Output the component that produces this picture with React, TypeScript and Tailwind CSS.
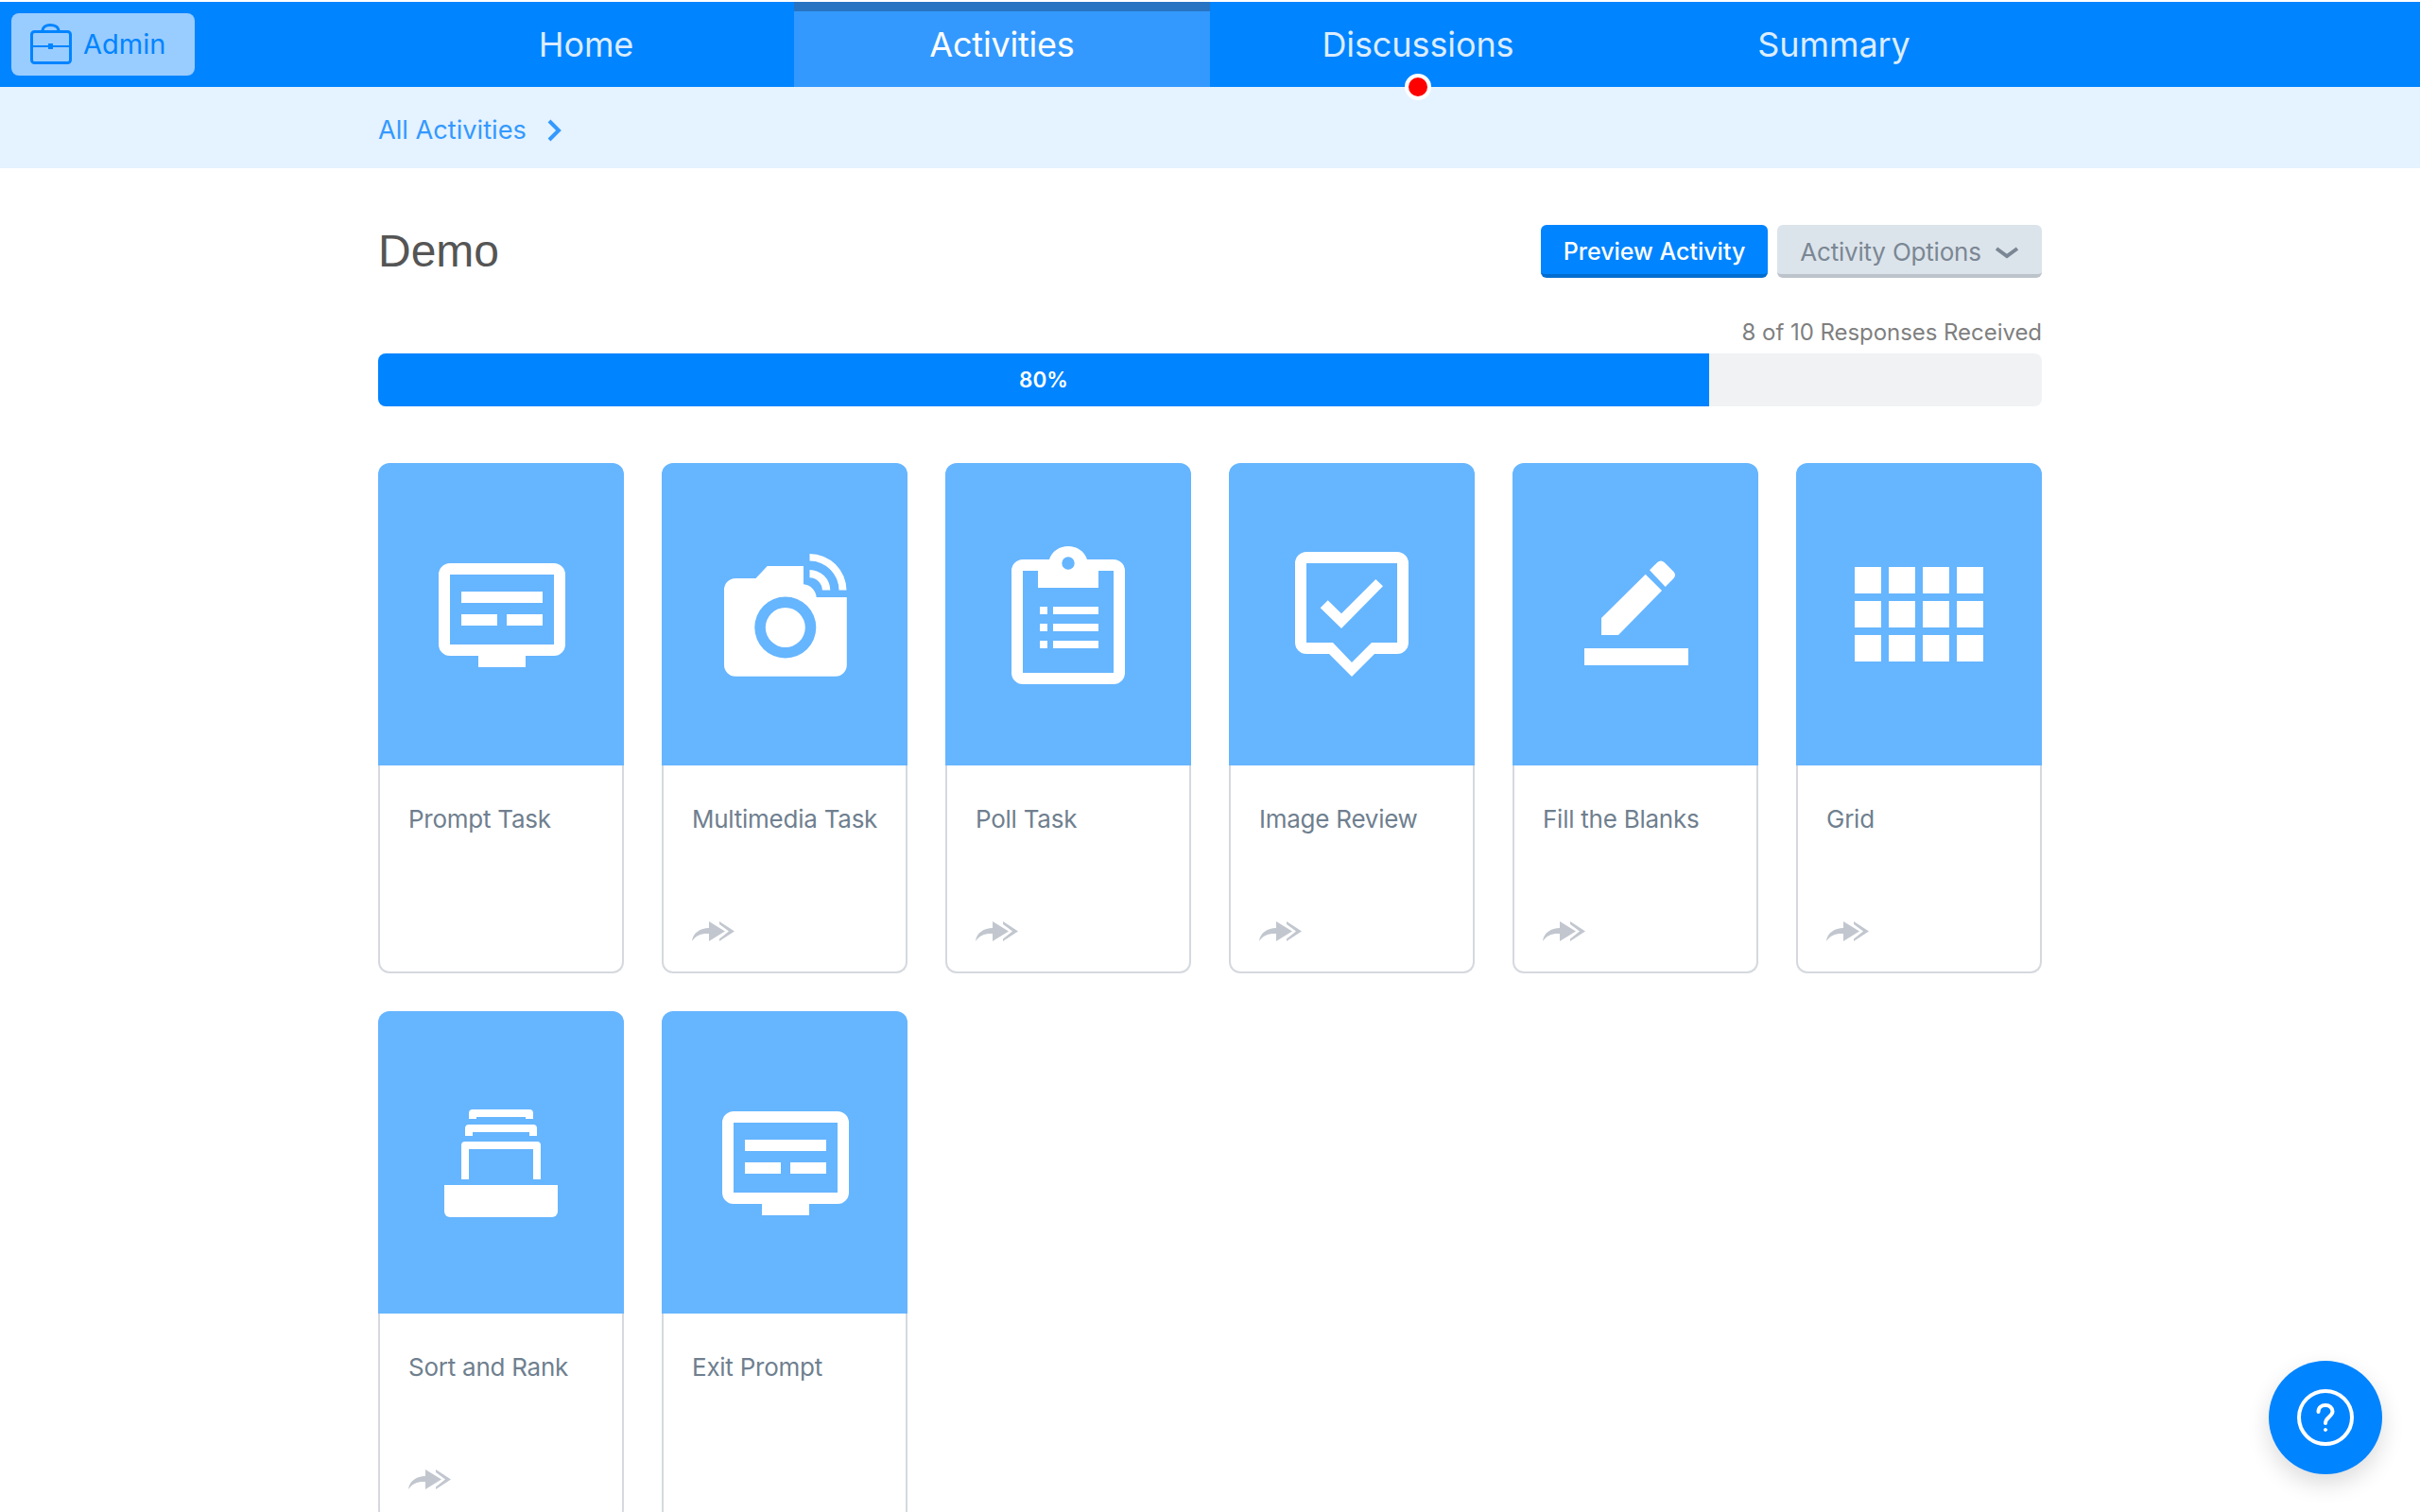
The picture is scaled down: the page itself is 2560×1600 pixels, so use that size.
import React from "react";

const Monitor = () => (
  <>
    <path fillRule="evenodd" d="M76 106H186A12 12 0 0 1 198 118V192A12 12 0 0 1 186 204H156V216H106V204H76A12 12 0 0 1 64 192V118A12 12 0 0 1 76 106ZM76 118V192H186V118Z" />
    <rect x="88" y="136" width="86" height="12" />
    <rect x="88" y="160" width="38" height="12" />
    <rect x="136" y="160" width="38" height="12" />
  </>
);

const Camera = () => (
  <>
    <path fillRule="evenodd" d="M78 122H99.5L111.7 109H150V128.2C157 129 163 134 163.7 142H195.8V213.7A12 12 0 0 1 183.8 225.7H78A12 12 0 0 1 66 213.7V134A12 12 0 0 1 78 122ZM130.8 141.5A32.5 32.5 0 1 0 130.8 206.5A32.5 32.5 0 1 0 130.8 141.5ZM130.8 153A21 21 0 1 1 130.8 195A21 21 0 1 1 130.8 153Z" />
    <path d="M156.5 96A39 39 0 0 1 195.5 134.6H187.5A31 31 0 0 0 156.5 103.6Z" />
    <path d="M156.5 113A21.8 21.8 0 0 1 178.3 134.6H169.8A13.3 13.3 0 0 0 156.5 121.3Z" />
  </>
);

const Clipboard = () => (
  <>
    <path fillRule="evenodd" d="M82 102H110C113 93 121 88 130 88C139 88 147 93 150 102H178A12 12 0 0 1 190 114V222A12 12 0 0 1 178 234H82A12 12 0 0 1 70 222V114A12 12 0 0 1 82 102ZM130 99.3A6.7 6.7 0 1 0 130 112.7A6.7 6.7 0 1 0 130 99.3ZM82 114V222H178V114H162V132H98V114Z" />
    <rect x="100" y="152" width="8" height="8" />
    <rect x="100" y="170" width="8" height="8" />
    <rect x="100" y="188" width="8" height="8" />
    <rect x="114" y="152" width="48" height="8" />
    <rect x="114" y="170" width="48" height="8" />
    <rect x="114" y="188" width="48" height="8" />
  </>
);

const Bubble = () => (
  <>
    <path fillRule="evenodd" d="M82 94H178A12 12 0 0 1 190 106V190A12 12 0 0 1 178 202H154L130 226L106 202H82A12 12 0 0 1 70 190V106A12 12 0 0 1 82 94ZM82 106V190H110L130 211L151 190H178V106Z" />
    <path d="M96.7 153.3L104.7 145.3L119 159.3L155.3 123L163 130.3L119 175Z" />
  </>
);

const Pencil = () => (
  <>
    <path d="M94 164L140.7 117.7L158 135L112 182H94Z" />
    <path d="M145 113.3L153.3 105Q157 102 160.5 105L170.5 115Q173.5 118.5 170.5 122L161.7 131Z" />
    <rect x="76" y="196" width="110" height="18" />
  </>
);

const GridIcon = () => (
  <>
    {[110, 146, 182].map((y) =>
      [62, 98, 134, 170].map((x) => <rect key={`${x}-${y}`} x={x} y={y} width="28" height="28" />)
    )}
  </>
);

const Sort = () => (
  <>
    <path d="M70 184H190V212A6 6 0 0 1 184 218H76A6 6 0 0 1 70 212Z" />
    <path d="M88 178V142A4 4 0 0 1 92 138H168A4 4 0 0 1 172 142V178H164V146H96V178Z" />
    <path d="M92 132V124A4 4 0 0 1 96 120H164A4 4 0 0 1 168 124V132H160V128H100V132Z" />
    <path d="M96 114V108A4 4 0 0 1 100 104H160A4 4 0 0 1 164 108V114H156V112H104V114Z" />
  </>
);

const Forward = () => (
  <svg width="46" height="22" viewBox="32 24 46 22" className="block" fill="#c2c7cf">
    <path d="M32 45C33 36 41 31 50 31V24L67 34.5L50 45V37C42 36.5 36 39 32 45Z" />
    <path d="M61 24L77 34.5L61 45V42.5L71 34.5L61 27Z" />
  </svg>
);

const cards: { title: string; icon: React.ReactNode; forward: boolean }[] = [
  { title: "Prompt Task", icon: <Monitor />, forward: false },
  { title: "Multimedia Task", icon: <Camera />, forward: true },
  { title: "Poll Task", icon: <Clipboard />, forward: true },
  { title: "Image Review", icon: <Bubble />, forward: true },
  { title: "Fill the Blanks", icon: <Pencil />, forward: true },
  { title: "Grid", icon: <GridIcon />, forward: true },
  { title: "Sort and Rank", icon: <Sort />, forward: true },
  { title: "Exit Prompt", icon: <Monitor />, forward: false },
];

const tabs = ["Home", "Activities", "Discussions", "Summary"];

export default function App() {
  return (
    <div className="relative h-[1600px] overflow-hidden bg-white pt-[2px] font-['Inter','Liberation_Sans',sans-serif]">
      <header className="relative flex h-[90px] bg-[#0084ff]">
        <div className="absolute left-[12px] top-[12px] flex h-[66px] w-[194px] items-center gap-[12px] rounded-[8px] bg-[#99ccff] pl-[20px] text-[29px] text-[#0084ff]">
          <svg width="44" height="44" viewBox="0 0 44 44" fill="none" stroke="#0084ff" strokeWidth="3">
            <rect x="1.5" y="8.5" width="41" height="33" rx="3" />
            <path d="M13 8C13 3.5 17 1.5 21 1.5C26 1.5 30 3.5 30 8" />
            <path d="M2 24H42" strokeWidth="2" />
            <rect x="19" y="21" width="5" height="6" fill="#0084ff" stroke="none" />
          </svg>
          <span>Admin</span>
        </div>
        <nav className="ml-[400px] flex">
          {tabs.map((t) => (
            <div
              key={t}
              className={
                t === "Activities"
                  ? "relative flex w-[440px] items-center justify-center border-t-[10px] border-[#2874c2] bg-[#3399ff] pb-[10px] text-[36px] tracking-[-0.2px] text-white"
                  : "relative flex w-[440px] items-center justify-center text-[36px] tracking-[-0.1px] text-[#dcedff]"
              }
            >
              {t}
              {t === "Discussions" && (
                <span className="absolute bottom-[-14px] left-[206px] h-[28px] w-[28px] rounded-full border-[4px] border-white bg-[#ff0000]" />
              )}
            </div>
          ))}
        </nav>
      </header>

      <div className="flex h-[86px] items-center gap-[21px] bg-[#e5f2ff] pl-[400px] pt-[6px] text-[27.2px] text-[#3399ff]">
        <span>All Activities</span>
        <svg width="16" height="24" viewBox="0 0 16 24" fill="none" stroke="#3399ff" strokeWidth="4">
          <path d="M3 2L13 12L3 22" />
        </svg>
      </div>

      <main className="mx-[400px]">
        <div className="mt-[60px] flex h-[56px] items-center justify-between">
          <h1 className="font-['Liberation_Sans',sans-serif] text-[48px] text-[#555555]">Demo</h1>
          <div className="flex gap-[10px]">
            <button className="flex h-[56px] w-[240px] items-center justify-center rounded-[6px] border-b-[4px] border-[#006ccf] bg-[#0084ff] pt-[5px] text-[25px] font-medium text-white">
              Preview Activity
            </button>
            <button className="flex h-[56px] w-[280px] items-center justify-center gap-[14px] rounded-[6px] border-b-[4px] border-[#bcc3cb] bg-[#dce4eb] pt-[5px] text-[26px] tracking-[-0.2px] text-[#7b8794]">
              Activity Options
              <svg width="26" height="14" viewBox="0 0 26 14" fill="none" stroke="#7b8794" strokeWidth="4">
                <path d="M2 3L13 11L24 3" />
              </svg>
            </button>
          </div>
        </div>

        <p className="mt-[42px] text-right text-[24px] leading-[32px] tracking-[-0.05px] text-[#7f7f7f]">8 of 10 Responses Received</p>
        <div className="mt-[6px] h-[56px] overflow-hidden rounded-[8px] bg-[#f0f2f4]">
          <div className="flex h-full items-center justify-center bg-[#0084ff] text-[22.5px] font-semibold text-white" style={{ width: "80%" }}>
            80%
          </div>
        </div>

        <div className="mt-[60px] grid grid-cols-6 gap-[40px]">
          {cards.map((c) => (
            <div key={c.title} className="flex h-[540px] flex-col">
              <div className="h-[320px] rounded-t-[12px] bg-[#66b5ff]">
                <svg width="260" height="320" viewBox="0 0 260 320" fill="#ffffff" className="block">
                  {c.icon}
                </svg>
              </div>
              <div className="flex flex-1 flex-col justify-between rounded-b-[12px] border-2 border-t-0 border-[#d5d9de] px-[30px] pb-[31px] pt-[40px]">
                <p className="whitespace-nowrap text-[26px] leading-[34px] tracking-[-0.25px] text-[#6f7f8f]">{c.title}</p>
                {c.forward && <Forward />}
              </div>
            </div>
          ))}
        </div>
      </main>

      <button className="absolute bottom-[40px] right-[40px] flex h-[120px] w-[120px] items-center justify-center rounded-full bg-[#0084ff] shadow-[0_10px_24px_rgba(0,0,0,0.14)]">
        <svg width="60" height="60" viewBox="0 0 60 60" fill="none" stroke="#ffffff" strokeWidth="4" strokeLinecap="round">
          <circle cx="30" cy="30" r="28" />
          <path d="M22.5 24C22.5 19.5 26 17 30 17C34.5 17 37.5 20 37.5 23.5C37.5 29 30 29.5 30 36" />
          <circle cx="30" cy="43" r="1.6" fill="#ffffff" strokeWidth="0.8" />
        </svg>
      </button>
    </div>
  );
}
